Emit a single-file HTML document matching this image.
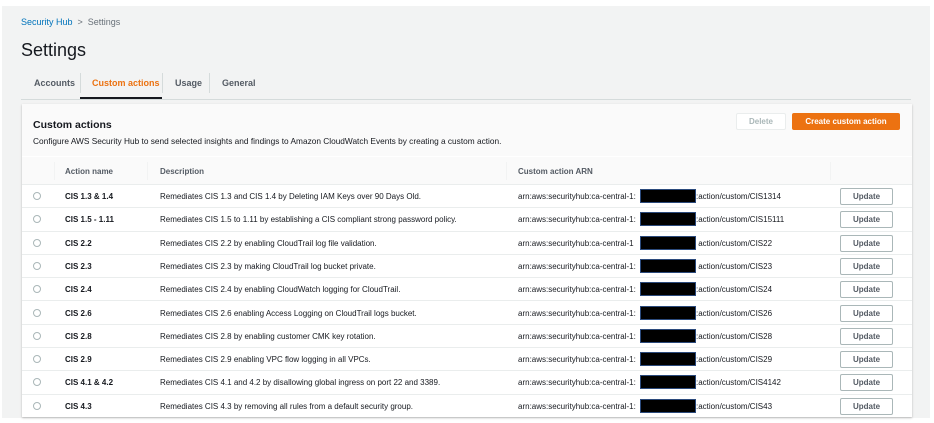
<!DOCTYPE html>
<html><head><meta charset="utf-8"><style>
*{box-sizing:border-box;margin:0;padding:0}
body{width:934px;height:423px;background:#fff;font-family:"Liberation Sans",sans-serif;position:relative;overflow:hidden;color:#16191f}
.bg{position:absolute;left:2px;top:6px;width:928px;height:412px;background:#f2f3f3}
.abs{position:absolute;white-space:nowrap}
.crumb{left:21px;top:17px;font-size:9px;color:#0073bb}
.crumb span{color:#687078}
h1{position:absolute;left:21px;top:40px;font-size:18px;font-weight:normal;color:#16191f}
.tab{top:78px;font-size:9px;font-weight:bold;color:#545b64}
.tabsep{position:absolute;top:73px;width:1px;height:20px;background:#d5dbdb}
.panel{position:absolute;left:22px;top:104px;width:890px;height:313px;background:#fff;box-shadow:0 1px 2px rgba(0,0,0,.25)}
.ph{position:absolute;left:0;top:0;width:890px;height:52px;background:#fafafa}
.th{position:absolute;left:0;top:53px;width:890px;height:28px;background:#fafafa;border-bottom:1px solid #eaeded}
.row{position:absolute;left:0;width:890px;height:23.3px;border-bottom:1px solid #eaeded;font-size:8px}
.row div{position:absolute;top:7px;white-space:nowrap}
.radio{left:11px;width:8px;height:8px;border:1px solid #aab7b8;border-radius:50%;top:7px!important}
.name{left:43px;font-weight:bold}
.desc{left:138px}
.arn{left:496px}
.red{left:618px!important;top:4px!important;width:56px;height:14px;background:#000;border:1px solid #2b4a7c}
.suf{left:674px}
.upd{left:818px!important;top:3px!important;width:53px;height:17px;border:1px solid #aab7b8;border-radius:2px;font-weight:bold;color:#545b64;text-align:center;line-height:15px}
.hs{position:absolute;top:58px;width:1px;height:18px;background:#f2f3f3}
</style></head><body>
<div class="bg"></div>
<div class="abs crumb">Security Hub <span>&nbsp;&gt;&nbsp; Settings</span></div>
<h1>Settings</h1>
<div class="abs tab" style="left:34px">Accounts</div>
<div class="tabsep" style="left:80px"></div>
<div class="abs tab" style="left:92px;color:#ec7211">Custom actions</div>
<div class="abs" style="left:80px;top:97px;width:82px;height:2px;background:#16191f"></div>
<div class="tabsep" style="left:162px"></div>
<div class="abs tab" style="left:175px">Usage</div>
<div class="tabsep" style="left:209px"></div>
<div class="abs tab" style="left:222px">General</div>
<div class="abs" style="left:21px;top:99px;width:890px;height:1px;background:#d5dbdb"></div>
<div class="panel">
<div class="ph"></div>
<div class="abs" style="left:11px;top:15px;font-size:10.5px;font-weight:bold">Custom actions</div>
<div class="abs" style="left:11px;top:32px;font-size:8.3px">Configure AWS Security Hub to send selected insights and findings to Amazon CloudWatch Events by creating a custom action.</div>
<div class="abs" style="left:714px;top:9px;width:50px;height:17px;border:1px solid #eaeded;border-radius:2px;background:#fff;color:#aab7b8;font-size:8px;font-weight:bold;text-align:center;line-height:15px">Delete</div>
<div class="abs" style="left:770px;top:9px;width:108px;height:17px;background:#ec7211;border-radius:2px;color:#fff;font-size:8px;font-weight:bold;text-align:center;line-height:17px">Create custom action</div>
<div class="th"></div>
<div class="hs" style="left:32px"></div>
<div class="hs" style="left:125px"></div>
<div class="hs" style="left:484px"></div>
<div class="hs" style="left:808px"></div>
<div class="abs" style="left:43px;top:63px;font-size:8px;font-weight:bold;color:#545b64">Action name</div>
<div class="abs" style="left:138px;top:63px;font-size:8px;font-weight:bold;color:#545b64">Description</div>
<div class="abs" style="left:496px;top:63px;font-size:8px;font-weight:bold;color:#545b64">Custom action ARN</div>

<div class="row" style="top:81px"><div class="radio"></div><div class="name">CIS 1.3 &amp; 1.4</div><div class="desc">Remediates CIS 1.3 and CIS 1.4 by Deleting IAM Keys over 90 Days Old.</div><div class="arn">arn:aws:securityhub:ca-central-1:</div><div class="red"></div><div class="suf">:action/custom/CIS1314</div><div class="upd">Update</div></div>
<div class="row" style="top:104.3px"><div class="radio"></div><div class="name">CIS 1.5 - 1.11</div><div class="desc">Remediates CIS 1.5 to 1.11 by establishing a CIS compliant strong password policy.</div><div class="arn">arn:aws:securityhub:ca-central-1:</div><div class="red"></div><div class="suf">:action/custom/CIS15111</div><div class="upd">Update</div></div>
<div class="row" style="top:127.6px"><div class="radio"></div><div class="name">CIS 2.2</div><div class="desc">Remediates CIS 2.2 by enabling CloudTrail log file validation.</div><div class="arn">arn:aws:securityhub:ca-central-1</div><div class="red"></div><div class="suf">&nbsp;action/custom/CIS22</div><div class="upd">Update</div></div>
<div class="row" style="top:150.9px"><div class="radio"></div><div class="name">CIS 2.3</div><div class="desc">Remediates CIS 2.3 by making CloudTrail log bucket private.</div><div class="arn">arn:aws:securityhub:ca-central-1:</div><div class="red"></div><div class="suf">&nbsp;action/custom/CIS23</div><div class="upd">Update</div></div>
<div class="row" style="top:174.2px"><div class="radio"></div><div class="name">CIS 2.4</div><div class="desc">Remediates CIS 2.4 by enabling CloudWatch logging for CloudTrail.</div><div class="arn">arn:aws:securityhub:ca-central-1:</div><div class="red"></div><div class="suf">:action/custom/CIS24</div><div class="upd">Update</div></div>
<div class="row" style="top:197.5px"><div class="radio"></div><div class="name">CIS 2.6</div><div class="desc">Remediates CIS 2.6 enabling Access Logging on CloudTrail logs bucket.</div><div class="arn">arn:aws:securityhub:ca-central-1:</div><div class="red"></div><div class="suf">:action/custom/CIS26</div><div class="upd">Update</div></div>
<div class="row" style="top:220.8px"><div class="radio"></div><div class="name">CIS 2.8</div><div class="desc">Remediates CIS 2.8 by enabling customer CMK key rotation.</div><div class="arn">arn:aws:securityhub:ca-central-1:</div><div class="red"></div><div class="suf">:action/custom/CIS28</div><div class="upd">Update</div></div>
<div class="row" style="top:244.1px"><div class="radio"></div><div class="name">CIS 2.9</div><div class="desc">Remediates CIS 2.9 enabling VPC flow logging in all VPCs.</div><div class="arn">arn:aws:securityhub:ca-central-1:</div><div class="red"></div><div class="suf">:action/custom/CIS29</div><div class="upd">Update</div></div>
<div class="row" style="top:267.4px"><div class="radio"></div><div class="name">CIS 4.1 &amp; 4.2</div><div class="desc">Remediates CIS 4.1 and 4.2 by disallowing global ingress on port 22 and 3389.</div><div class="arn">arn:aws:securityhub:ca-central-1:</div><div class="red"></div><div class="suf">:action/custom/CIS4142</div><div class="upd">Update</div></div>
<div class="row" style="top:290.7px;border-bottom:none"><div class="radio"></div><div class="name">CIS 4.3</div><div class="desc">Remediates CIS 4.3 by removing all rules from a default security group.</div><div class="arn">arn:aws:securityhub:ca-central-1:</div><div class="red"></div><div class="suf">:action/custom/CIS43</div><div class="upd">Update</div></div>
</div>
</body></html>
